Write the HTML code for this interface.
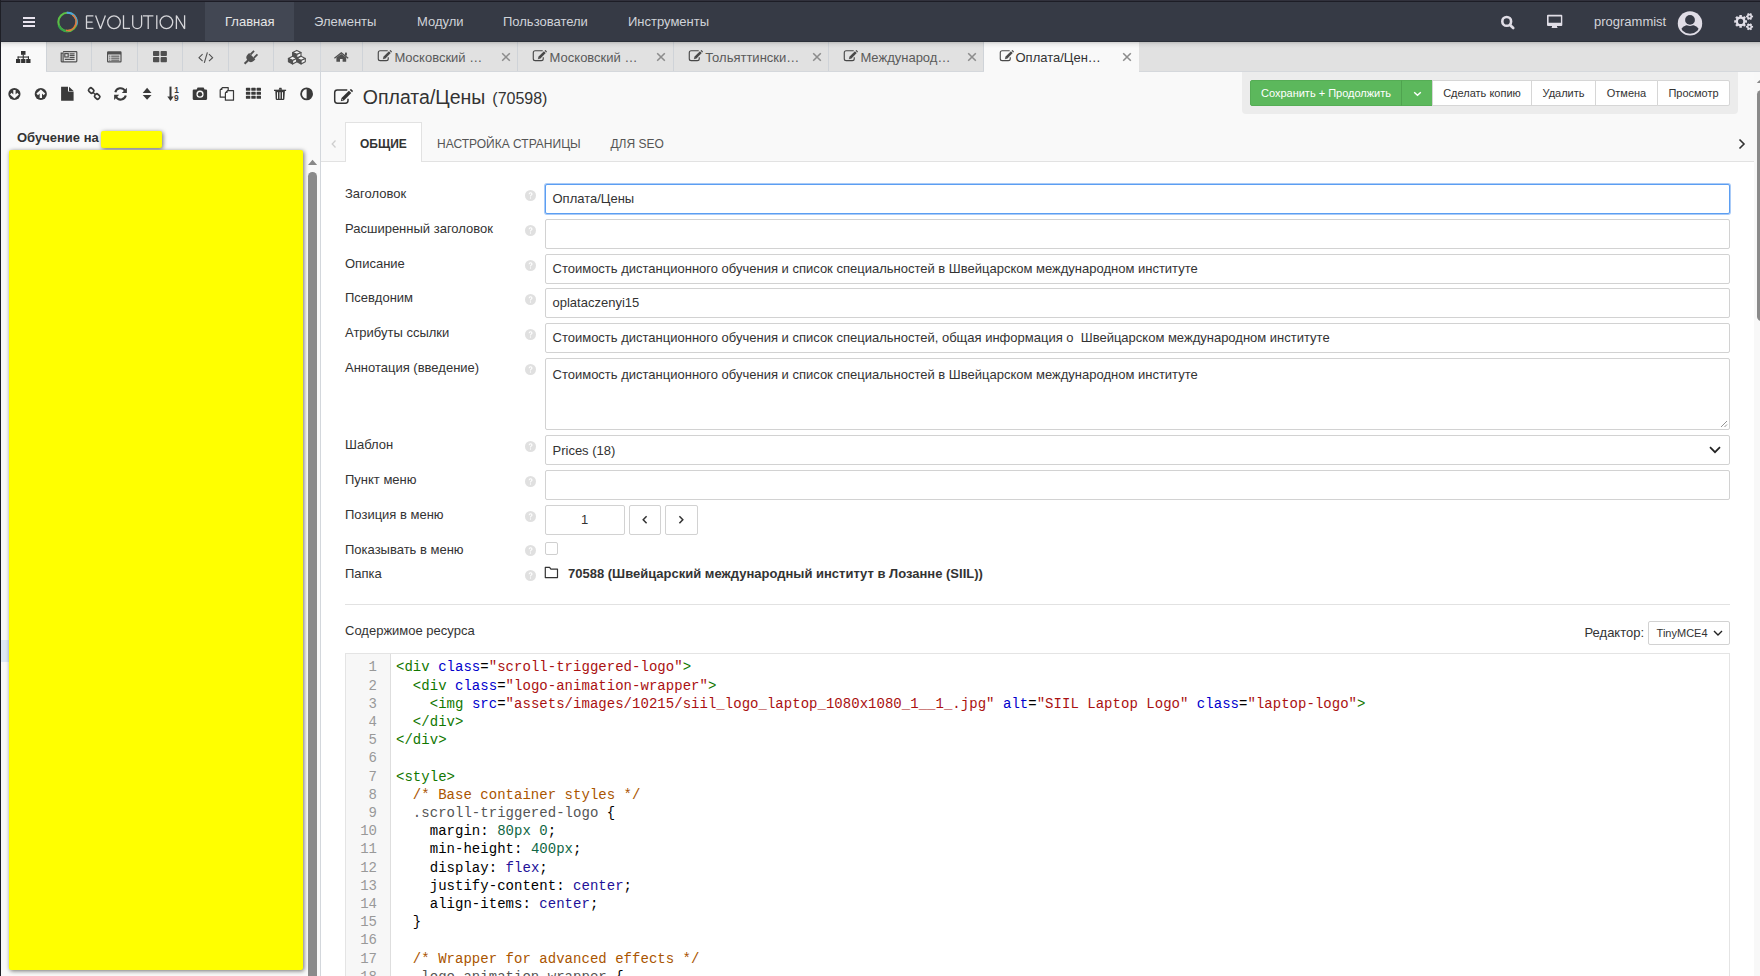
<!DOCTYPE html>
<html><head><meta charset="utf-8">
<style>
*{box-sizing:border-box}
html,body{margin:0;padding:0}
body{width:1760px;height:976px;overflow:hidden;position:relative;background:#fff;font-family:"Liberation Sans",sans-serif;color:#333}
.abs{position:absolute}
svg{display:block}
#frametop{left:0;top:0;width:1760px;height:2px;background:#1d1d26;border-top:1px solid #31313c}
#frameleft{left:0;top:0;width:1px;height:976px;background:#1e1f26}
#header{left:1px;top:2px;width:1759px;height:40px;background:#363a45;border-bottom:1px solid #2b2f38}
.burger i{position:absolute;left:23px;width:12px;height:2px;background:#e8e3ee}
.nav{top:2px;height:39px;line-height:39px;font-size:13px;color:#d0d3d9;padding:0 20px;white-space:nowrap}
.nav.active{background:#424753;color:#e6e6e6}
#username{left:1594px;top:14px;font-size:13px;color:#d4d4da}

#left{left:1px;top:42px;width:319px;height:934px;background:#f9f9f9}
#split{left:320px;top:42px;width:1px;height:934px;background:#d3d7dc}
#tabrow{left:1px;top:42px;width:1759px;height:30px;background:#e1e1e1;border-bottom:1px solid #d5d8dc}
.sep{top:42px;width:1px;height:29px;background:#cfd3d8}
#ltab0{left:1px;top:42px;width:45px;height:30px;background:#f9f9f9}
#dtabA{left:984px;top:42px;width:155px;height:30px;background:#f9f9f9}
#hshadow{left:1px;top:42px;width:1759px;height:6px;background:linear-gradient(rgba(0,0,0,0.16),rgba(0,0,0,0.05) 40%,rgba(0,0,0,0))}
.ic{fill:#4a4a4a}
.dt{top:42px;height:30px;line-height:31px;font-size:13px;color:#5a5a5a;white-space:nowrap}
.dx{top:42px;height:30px;line-height:30px;font-size:17px;color:#8c8c8c}
#mainhead{left:321px;top:72px;width:1433px;height:89px;background:#f9f9f9}
#actpanel{left:1242px;top:72px;width:496px;height:42px;background:#ececec;border-radius:0 0 4px 4px}
.btn{top:80px;height:26px;line-height:25px;font-size:11px;color:#333;background:#fff;border:1px solid #d6d6d6;text-align:center;white-space:nowrap}
#title{left:363px;top:84px;font-size:19.5px;color:#333;white-space:nowrap}
#title small{font-size:16px}
.ftab{top:139px;font-size:12px;color:#555;white-space:nowrap;text-transform:uppercase}

.tx{line-height:1;white-space:nowrap}
.inp{left:544.5px;width:1185.5px;height:30px;background:#fff;border:1px solid #d2d2d2;border-radius:2px}
.lbl{color:#333}
.help{left:524.9px;width:11px;height:11px}

#cm{left:345px;top:653px;width:1385px;height:330px;border:1px solid #e4e4e4;background:#fff}
#cmg{left:346px;top:654px;width:45px;height:330px;background:#f7f7f7;border-right:1px solid #dedede}
.ln{left:346px;width:31px;text-align:right;font-family:"Liberation Mono",monospace;font-size:14px;color:#999;line-height:1;white-space:pre}
.cl{left:396px;letter-spacing:0.028px;font-family:"Liberation Mono",monospace;font-size:14px;color:#000;line-height:1;white-space:pre}
.tg{color:#170}.at{color:#00c}.st{color:#a11}.cm{color:#a50}.qu{color:#555}.nu{color:#164}.ato{color:#219}
</style></head><body>
<!--HEADER-->
<div class="abs" id="frametop"></div>
<div class="abs" id="header"></div>
<div class="abs" id="frameleft"></div>
<div class="burger"><i style="top:17px"></i><i style="top:21px"></i><i style="top:25px"></i></div>
<svg class="abs" style="left:0;top:0" width="200" height="40" viewBox="0 0 200 40">
  <circle cx="67.5" cy="21.9" r="9.2" fill="none" stroke="#5cbf46" stroke-width="2.1"/>
  <path d="M58.5 25.5 A9.2 9.2 0 0 0 68 31.1" fill="none" stroke="#2e9f48" stroke-width="2.1" opacity="0.8"/>
  <path d="M66.7 12.73 A9.2 9.2 0 0 1 76.15 25.05" fill="none" stroke="#4aa3e0" stroke-width="2.1"/>
  <path d="M72.43 14.86 A8.6 8.6 0 0 1 66.0 30.37" fill="none" stroke="#e2773a" stroke-width="1.7"/>
  <g fill="none" stroke="#d6d6da" stroke-width="1.3" stroke-linejoin="bevel">
    <path d="M93.4 15.9 H86.5 V28.4 H93.4 M86.5 22.1 H92.6"/>
    <path d="M95.6 15.5 L100.5 28.8 L105.4 15.5"/>
    <ellipse cx="114" cy="22.2" rx="6.3" ry="6.4"/>
    <path d="M123.5 15.3 V28.4 H130"/>
    <path d="M132.7 15.3 V24.2 A4.45 4.45 0 0 0 141.6 24.2 V15.3"/>
    <path d="M143 15.9 H153.4 M148.2 15.9 V29"/>
    <path d="M156.8 15.3 V29"/>
    <ellipse cx="166.4" cy="22.2" rx="6.3" ry="6.4"/>
    <path d="M176.4 29 V15.5 L184.6 28.8 V15.3"/>
  </g>
</svg>
<div class="abs nav active" style="left:205px">Главная</div>
<div class="abs nav" style="left:294px">Элементы</div>
<div class="abs nav" style="left:397px">Модули</div>
<div class="abs nav" style="left:483px">Пользователи</div>
<div class="abs nav" style="left:608px">Инструменты</div>
<svg class="abs" style="left:1498px;top:13px" width="20" height="20" viewBox="0 0 20 20"><circle cx="8.7" cy="8.4" r="4.4" fill="none" stroke="#e0dde6" stroke-width="2.6"/><path d="M12.3 12.2 L15.2 15" stroke="#e0dde6" stroke-width="2.7" stroke-linecap="round"/></svg>
<svg class="abs" style="left:1545px;top:13px" width="20" height="18" viewBox="0 0 20 18"><path fill="#e0dde6" fill-rule="evenodd" d="M3 1.8 H16.3 Q17.3 1.8 17.3 2.8 V12 Q17.3 13 16.3 13 H12 V14 H12.4 V15 H6.7 V14 H7 V13 H3 Q2 13 2 12 V2.8 Q2 1.8 3 1.8Z M3.6 3.4 V9.8 H15.9 V3.4Z"/></svg>
<div class="abs" id="username">programmist</div>
<svg class="abs" style="left:1677px;top:10px" width="26" height="26" viewBox="0 0 26 26">
  <defs><clipPath id="avc"><circle cx="13" cy="13.4" r="10.4"/></clipPath></defs>
  <circle cx="13" cy="13.4" r="12.2" fill="#e0dde6"/>
  <g clip-path="url(#avc)"><circle cx="13" cy="26" r="11.3" fill="#363a45"/></g>
  <circle cx="13" cy="9.9" r="6.1" fill="#e0dde6"/>
  <circle cx="13" cy="9.9" r="4.9" fill="#363a45"/>
</svg>
<svg class="abs" style="left:1733px;top:10px" width="22" height="22" viewBox="0 0 22 22"><path fill="#e0dde6" fill-rule="evenodd" d="M12.45 10.19 L13.98 10.13 L13.98 12.67 L12.45 12.61 L11.88 13.98 L13.00 15.01 L11.21 16.80 L10.18 15.68 L8.81 16.25 L8.87 17.78 L6.33 17.78 L6.39 16.25 L5.02 15.68 L3.99 16.80 L2.20 15.01 L3.32 13.98 L2.75 12.61 L1.22 12.67 L1.22 10.13 L2.75 10.19 L3.32 8.82 L2.20 7.79 L3.99 6.00 L5.02 7.12 L6.39 6.55 L6.33 5.02 L8.87 5.02 L8.81 6.55 L10.18 7.12 L11.21 6.00 L13.00 7.79 L11.88 8.82Z M10.20 11.40 A2.6 2.6 0 1 0 5.00 11.40 A2.6 2.6 0 1 0 10.20 11.40ZM19.06 5.64 L20.07 5.54 L20.07 7.46 L19.06 7.36 L18.53 8.29 L19.12 9.12 L17.46 10.07 L17.03 9.15 L15.97 9.15 L15.54 10.07 L13.88 9.12 L14.47 8.29 L13.94 7.36 L12.93 7.46 L12.93 5.54 L13.94 5.64 L14.47 4.71 L13.88 3.88 L15.54 2.93 L15.97 3.85 L17.03 3.85 L17.46 2.93 L19.12 3.88 L18.53 4.71Z M17.50 6.50 A1.0 1.0 0 1 0 15.50 6.50 A1.0 1.0 0 1 0 17.50 6.50ZM19.06 15.89 L20.07 15.79 L20.07 17.71 L19.06 17.61 L18.53 18.54 L19.12 19.37 L17.46 20.32 L17.03 19.40 L15.97 19.40 L15.54 20.32 L13.88 19.37 L14.47 18.54 L13.94 17.61 L12.93 17.71 L12.93 15.79 L13.94 15.89 L14.47 14.96 L13.88 14.13 L15.54 13.18 L15.97 14.10 L17.03 14.10 L17.46 13.18 L19.12 14.13 L18.53 14.96Z M17.50 16.75 A1.0 1.0 0 1 0 15.50 16.75 A1.0 1.0 0 1 0 17.50 16.75Z"/></svg>
<!--/HEADER-->

<div class="abs" id="left"></div>
<div class="abs" id="tabrow"></div>
<div class="abs" id="ltab0"></div>
<div class="abs" id="dtabA"></div>
<div class="abs sep" style="left:46px"></div>
<div class="abs sep" style="left:91px"></div>
<div class="abs sep" style="left:137px"></div>
<div class="abs sep" style="left:182px"></div>
<div class="abs sep" style="left:228px"></div>
<div class="abs sep" style="left:273px"></div>
<div class="abs sep" style="left:362px"></div>
<div class="abs sep" style="left:517px"></div>
<div class="abs sep" style="left:673px"></div>
<div class="abs sep" style="left:828px"></div>
<div class="abs sep" style="left:983px"></div>
<div class="abs" id="split"></div>
<div class="abs" id="hshadow"></div>

<svg class="abs" style="left:16px;top:51px" width="15" height="12" viewBox="0 0 15 12" fill="#333"><rect x="5" y="0" width="4.5" height="3.8"/><rect x="6.7" y="3.5" width="1.1" height="4.6"/><rect x="1.6" y="5.5" width="11.4" height="1.1"/><rect x="1.6" y="5.5" width="1.1" height="2.6"/><rect x="11.9" y="5.5" width="1.1" height="2.6"/><rect x="0" y="8" width="4.3" height="4"/><rect x="5.1" y="8" width="4.3" height="4"/><rect x="10.2" y="8" width="4.3" height="4"/></svg>
<svg class="abs" style="left:60px;top:51px" width="18" height="12" viewBox="0 0 18 12"><g fill="none" stroke="#505050" stroke-width="1.2"><path d="M3.1 0.6 H16.2 Q16.8 0.6 16.8 1.2 V10 Q16.8 10.8 16 10.8 H1.8 Q1.2 10.8 1.2 10 V2.2 H3.1 V10.2"/><rect x="4.8" y="2.6" width="3.4" height="3.4"/><path d="M9.6 2.9 H14.6 M9.6 4.7 H14.6 M9.6 6.5 H14.6 M4.8 8.4 H14.6"/></g></svg>
<svg class="abs" style="left:107px;top:51px" width="15" height="12" viewBox="0 0 15 12"><g fill="#505050"><path fill-rule="evenodd" d="M1.2 0.2 H13.4 Q14.6 0.2 14.6 1.4 V10.2 Q14.6 11.4 13.4 11.4 H1.2 Q0 11.4 0 10.2 V1.4 Q0 0.2 1.2 0.2Z M1.2 3.4 V10.2 H13.4 V3.4Z"/><rect x="2.2" y="4.6" width="1.2" height="1.1"/><rect x="4.2" y="4.6" width="8.2" height="1.1"/><rect x="2.2" y="6.6" width="1.2" height="1.1"/><rect x="4.2" y="6.6" width="8.2" height="1.1"/><rect x="2.2" y="8.6" width="1.2" height="1.1"/><rect x="4.2" y="8.6" width="8.2" height="1.1"/></g></svg>
<svg class="abs" style="left:153px;top:51px" width="14" height="12" viewBox="0 0 14 12" fill="#505050"><rect x="0" y="0" width="6.3" height="5.1" rx="0.8"/><rect x="7.6" y="0" width="6.3" height="5.1" rx="0.8"/><rect x="0" y="6.1" width="6.3" height="5.1" rx="0.8"/><rect x="7.6" y="6.1" width="6.3" height="5.1" rx="0.8"/></svg>
<svg class="abs" style="left:198px;top:52px" width="16" height="11" viewBox="0 0 16 11"><g fill="none" stroke="#505050" stroke-width="1.1"><path d="M4.6 2.2 L1 5.7 L4.6 9.2"/><path d="M11 2.2 L14.6 5.7 L11 9.2"/><path d="M9.4 0.3 L6.3 10.8"/></g></svg>
<svg class="abs" style="left:0;top:46px" width="320" height="20" viewBox="0 46 320 20"><g fill="#505050">
<path d="M249.10 53.07 L255.33 59.30 L253.91 60.71 A4.4 4.4 0 0 1 247.69 54.49Z"/>
<path d="M249.88 53.85 L253.42 50.32 L254.69 51.59 L251.15 55.13Z"/>
<path d="M253.27 57.25 L256.81 53.71 L258.08 54.98 L254.55 58.52Z"/>
<path d="M247.97 59.01 L243.87 63.12 L245.28 64.53 L249.39 60.43Z"/>
</g>
<g stroke="#505050" stroke-width="1.1" stroke-linejoin="round">
<path d="M292.6 52.5 L296.8 50.4 L301.0 52.5 L296.8 54.6Z" fill="#f2f2f2"/><path d="M292.6 52.5 L296.8 54.6 L296.8 58.0 L292.6 55.9Z" fill="#505050"/><path d="M296.8 54.6 L301.0 52.5 L301.0 55.9 L296.8 58.0Z" fill="#f2f2f2"/><path d="M288.4 58.4 L292.59999999999997 56.3 L296.79999999999995 58.4 L292.59999999999997 60.5Z" fill="#f2f2f2"/><path d="M288.4 58.4 L292.59999999999997 60.5 L292.59999999999997 63.9 L288.4 61.8Z" fill="#505050"/><path d="M292.59999999999997 60.5 L296.79999999999995 58.4 L296.79999999999995 61.8 L292.59999999999997 63.9Z" fill="#f2f2f2"/><path d="M296.9 58.4 L301.09999999999997 56.3 L305.29999999999995 58.4 L301.09999999999997 60.5Z" fill="#f2f2f2"/><path d="M296.9 58.4 L301.09999999999997 60.5 L301.09999999999997 63.9 L296.9 61.8Z" fill="#505050"/><path d="M301.09999999999997 60.5 L305.29999999999995 58.4 L305.29999999999995 61.8 L301.09999999999997 63.9Z" fill="#f2f2f2"/></g></svg>

<svg class="abs" style="left:334px;top:52px" width="15" height="10" viewBox="0 0 15 10"><g fill="#505050"><path d="M7.3 0 L14.6 5.8 L13.8 6.8 L7.3 1.7 L0.8 6.8 L0 5.8Z"/><rect x="11" y="0.6" width="1.9" height="3"/><path d="M2.4 5.6 L7.3 1.9 L12.2 5.6 V9.8 H8.6 V7 H6 V9.8 H2.4Z"/></g></svg>

<div class="abs dt" style="left:394.4px">Московский …</div>
<div class="abs dt" style="left:549.6px">Московский …</div>
<div class="abs dt" style="left:705.2px">Тольяттински…</div>
<div class="abs dt" style="left:860.4px">Международ…</div>
<div class="abs dt" style="left:1015.5px;color:#333">Оплата/Цен…</div>

<svg class="abs" style="left:0;top:80px" width="320" height="26" viewBox="0 80 320 26">
 <g fill="#3a3a3a">
  <circle cx="14.4" cy="94" r="6.1"/>
  <path d="M13.3 90 H15.6 V94.4 L17.3 92.8 L18.9 94.4 L14.45 98.5 L10 94.4 L11.6 92.8 L13.3 94.4Z" fill="#f9f9f9"/>
  <circle cx="40.8" cy="94" r="6.1"/>
  <path d="M39.7 98 H42 V93.6 L43.7 95.2 L45.3 93.6 L40.85 89.5 L36.4 93.6 L38 95.2 L39.7 93.6Z" fill="#f9f9f9"/>
  <path d="M61.1 86.8 H68 V91.6 H73.6 V100.8 H61.1Z"/>
  <path d="M69 86.8 L73.6 91 H69Z"/>
 </g>
 <g fill="none" stroke="#3a3a3a" stroke-width="1.7">
  <rect x="88.6" y="88.4" width="5.2" height="4.2" rx="1.6" transform="rotate(45 91.2 90.5)"/>
  <rect x="94.6" y="94.4" width="5.2" height="4.2" rx="1.6" transform="rotate(45 97.2 96.5)"/>
  <path d="M92.8 92.2 L95.6 94.8" stroke-width="1.3"/>
 </g>
 <g fill="none" stroke="#3a3a3a" stroke-width="2.1">
  <path d="M115.3 92.2 A5.3 5.3 0 0 1 125 90.8"/>
  <path d="M125.8 95.6 A5.3 5.3 0 0 1 116.1 97"/>
 </g>
 <g fill="#3a3a3a">
  <path d="M126.9 87.8 V93 H121.8Z"/>
  <path d="M114.1 99.9 V94.7 H119.2Z"/>
  <path d="M142.7 93.1 L147.1 87.7 L151.5 93.1Z"/>
  <path d="M142.7 95 L147.1 99.7 L151.5 95Z"/>
  <rect x="169.5" y="86.6" width="2" height="11"/>
  <path d="M167.3 96.6 H173.7 L170.5 101Z"/>
 </g>
 <text x="174.3" y="93.3" font-family="Liberation Sans" font-weight="bold" font-size="8.4" fill="#3a3a3a">1</text>
 <text x="174.1" y="101" font-family="Liberation Sans" font-weight="bold" font-size="8.4" fill="#3a3a3a">9</text>
 <g fill="#3a3a3a">
  <path fill-rule="evenodd" d="M196.6 89.6 L197.6 87.4 H203.6 L204.6 89.6 H206 Q207.1 89.6 207.1 90.7 V98.8 Q207.1 99.9 206 99.9 H193.8 Q192.7 99.9 192.7 98.8 V90.7 Q192.7 89.6 193.8 89.6Z M200 90.6 A3.6 3.6 0 1 0 200 97.8 A3.6 3.6 0 1 0 200 90.6Z"/>
  <circle cx="200" cy="94.2" r="2.2"/>
 </g>
 <g fill="#f9f9f9" stroke="#3a3a3a" stroke-width="1.2" stroke-linejoin="round">
  <path d="M222.4 87.6 H228.2 V97.2 H220.2 V89.9Z"/>
  <path d="M227.5 90.6 H233.5 V100.2 H225.4 V92.9Z"/>
 </g>
 <g fill="#3a3a3a">
  <path d="M220.2 89.9 L222.4 87.6 V89.9Z"/><path d="M225.4 92.9 L227.5 90.6 V92.9Z"/>
  <rect x="245.9" y="87.8" width="4.4" height="3" rx="0.6"/><rect x="251.3" y="87.8" width="4.4" height="3" rx="0.6"/><rect x="256.6" y="87.8" width="4.4" height="3" rx="0.6"/>
  <rect x="245.9" y="91.8" width="4.4" height="3" rx="0.6"/><rect x="251.3" y="91.8" width="4.4" height="3" rx="0.6"/><rect x="256.6" y="91.8" width="4.4" height="3" rx="0.6"/>
  <rect x="245.9" y="95.8" width="4.4" height="3" rx="0.6"/><rect x="251.3" y="95.8" width="4.4" height="3" rx="0.6"/><rect x="256.6" y="95.8" width="4.4" height="3" rx="0.6"/>
  <path d="M278.6 89.8 L279.4 87.8 H281.4 L282.2 89.8Z"/>
  <rect x="274" y="89.7" width="12.1" height="1.3"/>
  <path d="M275.3 91 H284.9 L284.4 99.1 Q284.3 100 283.4 100 H276.7 Q275.8 100 275.7 99.1Z"/>
 </g>
 <g fill="#f9f9f9"><rect x="277" y="92.2" width="1" height="6.6"/><rect x="279.5" y="92.2" width="1" height="6.6"/><rect x="282" y="92.2" width="1" height="6.6"/></g>
 <circle cx="306.6" cy="93.9" r="5.5" fill="none" stroke="#3a3a3a" stroke-width="1.8"/>
 <path d="M306.6 88.4 A5.5 5.5 0 0 1 306.6 99.4Z" fill="#3a3a3a"/>
</svg>
<div class="abs tx" style="left:17px;top:131.2px;font-size:13px;font-weight:bold;color:#333">Обучение на</div>
<div class="abs" style="left:101px;top:131px;width:61px;height:17px;background:#ff0;border-radius:2px;box-shadow:1px 1px 4px rgba(0,0,0,0.55)"></div>
<div class="abs" style="left:1px;top:640px;width:9px;height:22px;background:#dde8f5"></div>
<div class="abs" style="left:9px;top:150px;width:294px;height:820px;background:#ff0;border-radius:2px;box-shadow:1px 1px 4px rgba(0,0,0,0.55)"></div>
<svg class="abs" style="left:501.1px;top:51.6px" width="10" height="10"><path d="M1.2 1.2 L8.8 8.8 M8.8 1.2 L1.2 8.8" stroke="#8c8c8c" stroke-width="1.55"/></svg>
<svg class="abs" style="left:656.4px;top:51.6px" width="10" height="10"><path d="M1.2 1.2 L8.8 8.8 M8.8 1.2 L1.2 8.8" stroke="#8c8c8c" stroke-width="1.55"/></svg>
<svg class="abs" style="left:811.7px;top:51.6px" width="10" height="10"><path d="M1.2 1.2 L8.8 8.8 M8.8 1.2 L1.2 8.8" stroke="#8c8c8c" stroke-width="1.55"/></svg>
<svg class="abs" style="left:967.0px;top:51.6px" width="10" height="10"><path d="M1.2 1.2 L8.8 8.8 M8.8 1.2 L1.2 8.8" stroke="#8c8c8c" stroke-width="1.55"/></svg>
<svg class="abs" style="left:1122.3px;top:51.6px" width="10" height="10"><path d="M1.2 1.2 L8.8 8.8 M8.8 1.2 L1.2 8.8" stroke="#8c8c8c" stroke-width="1.55"/></svg>
<div class="abs" id="mainhead"></div>
<div class="abs" id="actpanel"></div>
<div class="abs btn" style="left:1250px;width:152px;background:#5cb85c;border-color:#55ad55;color:#fff;border-radius:2px 0 0 2px">Сохранить + Продолжить</div>
<div class="abs btn" style="left:1401px;width:32px;background:#5cb85c;border-color:#55ad55;border-left-color:#4fa34f;color:#fff"><svg style="position:absolute;left:11px;top:10px" width="9" height="6"><path d="M1.2 1.2 L4.5 4.3 L7.8 1.2" fill="none" stroke="#fff" stroke-width="1.4"/></svg></div>
<div class="abs btn" style="left:1432px;width:100px">Сделать копию</div>
<div class="abs btn" style="left:1531px;width:65px">Удалить</div>
<div class="abs btn" style="left:1595px;width:63px">Отмена</div>
<div class="abs btn" style="left:1657px;width:73px;border-radius:0 2px 2px 0">Просмотр</div>
<div class="abs tx" style="left:362.8px;top:87.8px;font-size:19.5px;color:#333">Оплата/Цены</div><div class="abs tx" style="left:492.3px;top:90.5px;font-size:16px;color:#333">(70598)</div>
<svg width="0" height="0" style="position:absolute"><defs>
<symbol id="edit" viewBox="0 0 20 16"><path d="M14.3 1.0 H4.3 Q1.7 1.0 1.7 3.6 V11.6 Q1.7 14.2 4.3 14.2 H12.4 Q15 14.2 15 11.6 V9.8" fill="none" stroke="#333" stroke-width="1.5"/><path d="M7.8 12.2 L8.5 9.1 L15.9 1.7 L18.3 4.1 L10.9 11.5Z" fill="#333"/><path d="M8.9 11.2 L9.2 10.1 L10 10.9Z" fill="#fff"/><path d="M16.7 0.9 L17.5 0.2 Q17.9 -0.2 18.3 0.2 L19.7 1.6 Q20.1 2 19.7 2.4 L19.1 3.3Z" fill="#333"/></symbol>
<symbol id="help" viewBox="0 0 11 11"><circle cx="5.5" cy="5.5" r="5.5" fill="#e0e0e0"/><path d="M3.6 4.3 Q3.7 2.3 5.6 2.3 Q7.5 2.3 7.5 4 Q7.5 5 6.4 5.6 Q5.9 5.9 5.9 6.6 H4.9 Q4.8 5.4 5.7 4.9 Q6.4 4.5 6.4 4 Q6.4 3.3 5.6 3.3 Q4.7 3.3 4.6 4.3Z" fill="#fff"/><rect x="4.9" y="7.4" width="1.1" height="1.2" fill="#fff"/></symbol>
</defs></svg>
<svg class="abs" style="left:333px;top:88.8px" width="20" height="16"><use href="#edit"/></svg>
<svg class="abs" style="left:376.5px;top:50.3px" width="15" height="12" viewBox="0 0 20 16"><use href="#edit" style="opacity:0.88"/></svg>
<svg class="abs" style="left:532px;top:50.3px" width="15" height="12" viewBox="0 0 20 16"><use href="#edit" style="opacity:0.88"/></svg>
<svg class="abs" style="left:687.5px;top:50.3px" width="15" height="12" viewBox="0 0 20 16"><use href="#edit" style="opacity:0.88"/></svg>
<svg class="abs" style="left:843px;top:50.3px" width="15" height="12" viewBox="0 0 20 16"><use href="#edit" style="opacity:0.88"/></svg>
<svg class="abs" style="left:998.5px;top:50.3px" width="15" height="12" viewBox="0 0 20 16"><use href="#edit" style="opacity:0.88"/></svg>
<div class="abs" style="left:321px;top:161px;width:1433px;height:1px;background:#e2e2e2"></div>
<div class="abs" style="left:345px;top:122px;width:77px;height:40px;background:#fff;border:1px solid #e2e2e2;border-bottom:none"></div>
<div class="abs tx" style="left:360px;top:137.94px;font-size:12px;font-weight:bold;color:#333">ОБЩИЕ</div>
<div class="abs tx" style="left:437px;top:137.94px;font-size:12px;color:#555">НАСТРОЙКА СТРАНИЦЫ</div>
<div class="abs tx" style="left:610.4px;top:137.94px;font-size:12px;color:#555">ДЛЯ SEO</div>
<svg class="abs" style="left:330px;top:139px" width="8" height="10"><path d="M5.5 1.5 L2.2 5 L5.5 8.5" fill="none" stroke="#cfcfcf" stroke-width="1.3"/></svg>
<svg class="abs" style="left:1737px;top:138px" width="10" height="12"><path d="M2.5 1.5 L7 6 L2.5 10.5" fill="none" stroke="#333" stroke-width="1.6"/></svg>
<!--FORM-->
<div class="abs tx" style="left:345px;top:187.20px;font-size:13px;color:#333">Заголовок</div>
<svg class="abs help" style="top:189.80px"><use href="#help"/></svg>
<div class="abs inp" style="top:184px;height:30px;border-color:#5b9ef2;box-shadow:0 0 0 1px rgba(100,160,240,0.55);"></div>
<div class="abs tx" style="left:552.5px;top:192.10px;font-size:13px;color:#333">Оплата/Цены</div>
<div class="abs tx" style="left:345px;top:222.20px;font-size:13px;color:#333">Расширенный заголовок</div>
<svg class="abs help" style="top:224.80px"><use href="#help"/></svg>
<div class="abs inp" style="top:219px;height:30px;"></div>
<div class="abs tx" style="left:345px;top:257.20px;font-size:13px;color:#333">Описание</div>
<svg class="abs help" style="top:259.80px"><use href="#help"/></svg>
<div class="abs inp" style="top:254px;height:30px;"></div>
<div class="abs tx" style="left:552.5px;top:262.10px;font-size:13px;color:#333">Стоимость дистанционного обучения и список специальностей в Швейцарском международном институте</div>
<div class="abs tx" style="left:345px;top:291.20px;font-size:13px;color:#333">Псевдоним</div>
<svg class="abs help" style="top:293.80px"><use href="#help"/></svg>
<div class="abs inp" style="top:288px;height:30px;"></div>
<div class="abs tx" style="left:552.5px;top:296.10px;font-size:13px;color:#333">oplataczenyi15</div>
<div class="abs tx" style="left:345px;top:326.20px;font-size:13px;color:#333">Атрибуты ссылки</div>
<svg class="abs help" style="top:328.80px"><use href="#help"/></svg>
<div class="abs inp" style="top:323px;height:30px;"></div>
<div class="abs tx" style="left:552.5px;top:331.10px;font-size:13px;color:#333">Стоимость дистанционного обучения и список специальностей, общая информация о&nbsp; Швейцарском международном институте</div>
<div class="abs tx" style="left:345px;top:361.20px;font-size:13px;color:#333">Аннотация (введение)</div>
<svg class="abs help" style="top:363.80px"><use href="#help"/></svg>
<div class="abs inp" style="top:358px;height:72px;"></div>
<div class="abs tx" style="left:552.5px;top:367.50px;font-size:13px;color:#333">Стоимость дистанционного обучения и список специальностей в Швейцарском международном институте</div>
<svg class="abs" style="left:1720px;top:420px" width="8" height="8"><path d="M7 1 L1 7 M7 4.5 L4.5 7" stroke="#888" stroke-width="0.9"/></svg>
<div class="abs tx" style="left:345px;top:438.20px;font-size:13px;color:#333">Шаблон</div>
<svg class="abs help" style="top:440.80px"><use href="#help"/></svg>
<div class="abs inp" style="top:435px;height:30px;"></div>
<div class="abs tx" style="left:552.5px;top:443.80px;font-size:13px;color:#333">Prices (18)</div>
<svg class="abs" style="left:1709px;top:446px" width="12" height="8"><path d="M1 1.2 L6 6.2 L11 1.2" fill="none" stroke="#222" stroke-width="1.7"/></svg>
<div class="abs tx" style="left:345px;top:473.20px;font-size:13px;color:#333">Пункт меню</div>
<svg class="abs help" style="top:475.80px"><use href="#help"/></svg>
<div class="abs inp" style="top:470px;height:30px;"></div>
<div class="abs tx" style="left:345px;top:508.20px;font-size:13px;color:#333">Позиция в меню</div>
<svg class="abs help" style="top:510.80px"><use href="#help"/></svg>
<div class="abs inp" style="top:505px;width:80px;height:30px"></div>
<div class="abs tx" style="left:581px;top:513.20px;font-size:13px;color:#333">1</div>
<div class="abs inp" style="left:629px;top:505px;width:32px;height:30px"></div>
<div class="abs inp" style="left:665px;top:505px;width:33px;height:30px"></div>
<svg class="abs" style="left:641px;top:515px" width="8" height="10"><path d="M5.6 1.2 L2.2 4.7 L5.6 8.2" fill="none" stroke="#333" stroke-width="1.5"/></svg>
<svg class="abs" style="left:677px;top:515px" width="8" height="10"><path d="M2.4 1.2 L5.8 4.7 L2.4 8.2" fill="none" stroke="#333" stroke-width="1.5"/></svg>
<div class="abs tx" style="left:345px;top:543.40px;font-size:13px;color:#333">Показывать в меню</div>
<svg class="abs help" style="top:544.80px"><use href="#help"/></svg>
<div class="abs" style="left:545px;top:542px;width:13px;height:13px;border:1px solid #cfcfcf;border-radius:2px;background:#fff"></div>
<div class="abs tx" style="left:345px;top:567.00px;font-size:13px;color:#333">Папка</div>
<svg class="abs help" style="top:569.80px"><use href="#help"/></svg>
<svg class="abs" style="left:544px;top:566px" width="15" height="13"><path d="M1.3 11.6 V1.4 H5.6 L6.9 3.2 H13.5 V11.6Z" fill="none" stroke="#333" stroke-width="1.2" stroke-linejoin="round"/></svg>
<div class="abs tx" style="left:568px;top:567.00px;font-size:13px;font-weight:bold;color:#333">70588 (Швейцарский международный институт в Лозанне (SIIL))</div>
<!--/FORM-->
<div class="abs" style="left:345px;top:604px;width:1385px;height:1px;background:#e2e2e2"></div>
<div class="abs tx" style="left:345px;top:624.20px;font-size:13px;color:#333">Содержимое ресурса</div>
<div class="abs tx" style="left:1584.5px;top:626.00px;font-size:13px;color:#333">Редактор:</div>
<div class="abs inp" style="left:1647.5px;top:621.3px;width:82px;height:24px"></div>
<div class="abs tx" style="left:1656.6px;top:628.19px;font-size:11px;color:#333">TinyMCE4</div>
<svg class="abs" style="left:1713px;top:630px" width="10" height="7"><path d="M1 1 L5 5 L9 1" fill="none" stroke="#222" stroke-width="1.4"/></svg>
<div class="abs" id="cm"></div><div class="abs" id="cmg"></div>
<div class="abs ln" style="top:660.35px">1</div>
<div class="abs cl" style="top:660.35px"><span class="tg">&lt;div</span> <span class="at">class</span>=<span class="st">"scroll-triggered-logo"</span><span class="tg">&gt;</span></div>
<div class="abs ln" style="top:678.55px">2</div>
<div class="abs cl" style="top:678.55px">  <span class="tg">&lt;div</span> <span class="at">class</span>=<span class="st">"logo-animation-wrapper"</span><span class="tg">&gt;</span></div>
<div class="abs ln" style="top:696.75px">3</div>
<div class="abs cl" style="top:696.75px">    <span class="tg">&lt;img</span> <span class="at">src</span>=<span class="st">"assets/images/10215/siil_logo_laptop_1080x1080_1__1_.jpg"</span> <span class="at">alt</span>=<span class="st">"SIIL Laptop Logo"</span> <span class="at">class</span>=<span class="st">"laptop-logo"</span><span class="tg">&gt;</span></div>
<div class="abs ln" style="top:714.95px">4</div>
<div class="abs cl" style="top:714.95px">  <span class="tg">&lt;/div&gt;</span></div>
<div class="abs ln" style="top:733.15px">5</div>
<div class="abs cl" style="top:733.15px"><span class="tg">&lt;/div&gt;</span></div>
<div class="abs ln" style="top:751.35px">6</div>
<div class="abs ln" style="top:769.55px">7</div>
<div class="abs cl" style="top:769.55px"><span class="tg">&lt;style&gt;</span></div>
<div class="abs ln" style="top:787.75px">8</div>
<div class="abs cl" style="top:787.75px">  <span class="cm">/* Base container styles */</span></div>
<div class="abs ln" style="top:805.95px">9</div>
<div class="abs cl" style="top:805.95px">  <span class="qu">.scroll-triggered-logo</span> {</div>
<div class="abs ln" style="top:824.15px">10</div>
<div class="abs cl" style="top:824.15px">    margin: <span class="nu">80px</span> <span class="nu">0</span>;</div>
<div class="abs ln" style="top:842.35px">11</div>
<div class="abs cl" style="top:842.35px">    min-height: <span class="nu">400px</span>;</div>
<div class="abs ln" style="top:860.55px">12</div>
<div class="abs cl" style="top:860.55px">    display: <span class="ato">flex</span>;</div>
<div class="abs ln" style="top:878.75px">13</div>
<div class="abs cl" style="top:878.75px">    justify-content: <span class="ato">center</span>;</div>
<div class="abs ln" style="top:896.95px">14</div>
<div class="abs cl" style="top:896.95px">    align-items: <span class="ato">center</span>;</div>
<div class="abs ln" style="top:915.15px">15</div>
<div class="abs cl" style="top:915.15px">  }</div>
<div class="abs ln" style="top:933.35px">16</div>
<div class="abs ln" style="top:951.55px">17</div>
<div class="abs cl" style="top:951.55px">  <span class="cm">/* Wrapper for advanced effects */</span></div>
<div class="abs ln" style="top:969.75px">18</div>
<div class="abs cl" style="top:969.75px">  <span class="qu">.logo-animation-wrapper</span> {</div>


<div class="abs" style="left:1754px;top:72px;width:6px;height:904px;background:#f8f8f8"></div>
<svg class="abs" style="left:1755px;top:78px" width="5" height="6"><path d="M1.8 5 L4.6 2 L7.4 5Z" fill="#888"/></svg>
<div class="abs" style="left:1757px;top:90px;width:9px;height:231px;background:#8a8a8a;border-radius:4.5px"></div>
<svg class="abs" style="left:307px;top:159px" width="11" height="7"><path d="M1 6.1 L5.55 0.8 L10.1 6.1Z" fill="#888"/></svg>
<div class="abs" style="left:308.1px;top:171.8px;width:8.8px;height:820px;background:#8a8a8a;border-radius:4.4px"></div>
<!--BODY-->
</body></html>
